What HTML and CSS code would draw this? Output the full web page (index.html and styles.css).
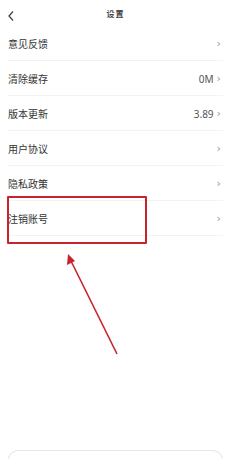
FILE: index.html
```html
<!DOCTYPE html>
<html lang="zh">
<head>
<meta charset="utf-8">
<link rel="stylesheet" href="styles.css">
</head>
<body>
<div class="page">
  <header class="topbar">
    <svg class="back" width="8" height="12" viewBox="0 0 8 12"><path d="M6 1.5 L2 6 L6 10.5" fill="none" stroke="#444" stroke-width="1.3"/></svg>
    <div class="title">设置</div>
  </header>
  <ul class="list">
    <li class="row"><span class="label">意见反馈</span><span class="right"><span class="chev">›</span></span></li>
    <li class="row"><span class="label">清除缓存</span><span class="right"><span class="value">0M</span><span class="chev">›</span></span></li>
    <li class="row"><span class="label">版本更新</span><span class="right"><span class="value">3.89</span><span class="chev">›</span></span></li>
    <li class="row"><span class="label">用户协议</span><span class="right"><span class="chev">›</span></span></li>
    <li class="row"><span class="label">隐私政策</span><span class="right"><span class="chev">›</span></span></li>
    <li class="row"><span class="label">注销账号</span><span class="right"><span class="chev">›</span></span></li>
  </ul>
  <div class="bottom-card"></div>
  <div class="highlight"></div>
  <svg class="arrow" width="231" height="459" viewBox="0 0 231 459">
    <line x1="117" y1="354" x2="71" y2="261" stroke="#c8232c" stroke-width="1.6"/>
    <polygon points="68,254 67,265 75,261" fill="#c8232c"/>
  </svg>
</div>
</body>
</html>
```

FILE: styles.css
```css
html, body {
  margin: 0;
  padding: 0;
  background: #fff;
  overflow: hidden;
}
.page {
  position: relative;
  width: 231px;
  height: 459px;
  display: flex;
  flex-direction: column;
  font-family: "Noto Sans CJK SC", "Noto Sans", sans-serif;
  color: #333;
  overflow: hidden;
}
.topbar {
  height: 26px;
  display: flex;
  align-items: center;
  position: relative;
  padding: 0 0 0 7px;
}
.back {
  display: block;
  margin-top: 5px;
}
.title {
  position: absolute;
  left: 0;
  right: 0;
  top: 8px;
  text-align: center;
  font-size: 8px;
  font-weight: 700;
  color: #444;
  letter-spacing: 1px;
  line-height: 12px;
}
.list {
  list-style: none;
  margin: 0;
  padding: 0 8px;
}
.row {
  height: 35px;
  box-sizing: border-box;
  display: flex;
  align-items: center;
  justify-content: space-between;
  border-bottom: 1px solid #f3f3f3;
  padding-top: 1px;
}
.label {
  font-size: 10px;
  color: #333;
  line-height: 14px;
}
.right {
  display: flex;
  align-items: center;
  gap: 3px;
  padding-right: 2px;
}
.value {
  font-family: "Noto Sans", sans-serif;
  font-size: 10px;
  color: #555;
}
.chev {
  font-family: "DejaVu Sans", sans-serif;
  font-size: 11px;
  color: #999;
  line-height: 12px;
}
.bottom-card {
  margin: auto 8px 0;
  height: 20px;
  margin-bottom: -12px;
  border: 1px solid #e6e6e6;
  border-bottom: none;
  border-radius: 10px 10px 0 0;
}
.highlight {
  position: absolute;
  left: 7px;
  top: 196px;
  width: 136px;
  height: 44px;
  border: 2px solid #c8232c;
  box-sizing: content-box;
  border-radius: 1px;
}
.arrow {
  position: absolute;
  left: 0;
  top: 0;
  pointer-events: none;
}
```
